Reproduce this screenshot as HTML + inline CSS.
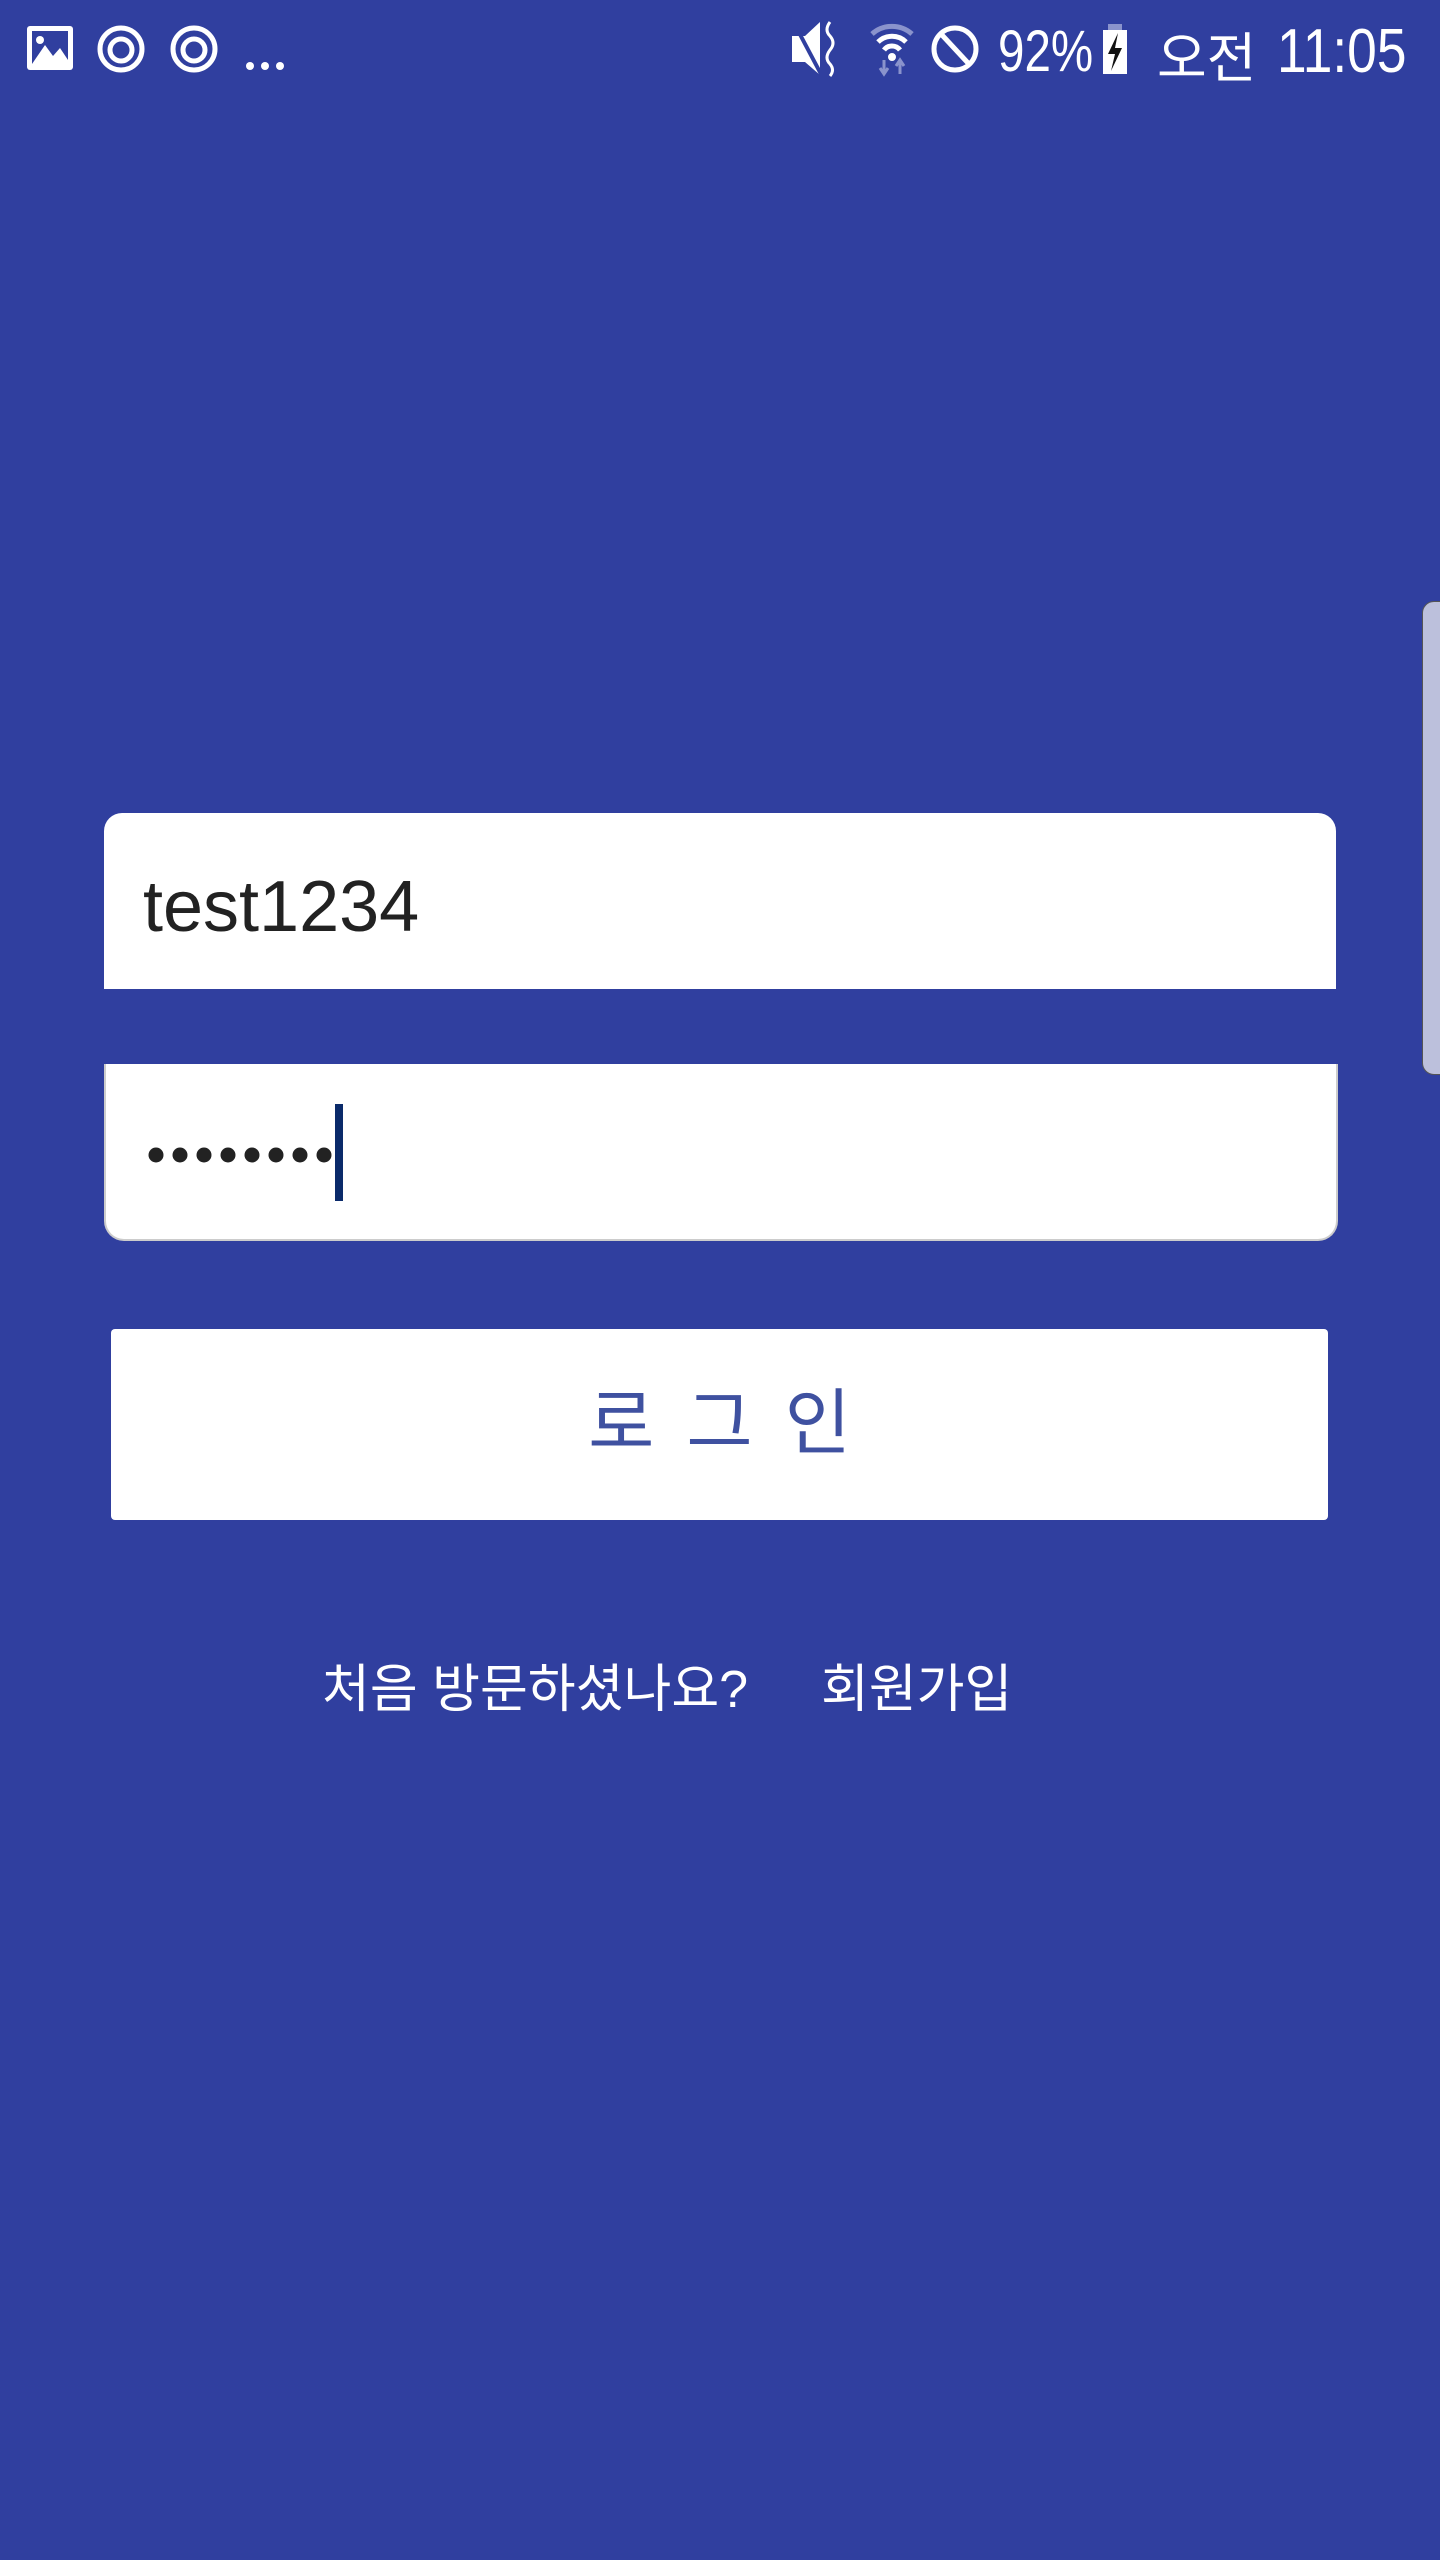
<!DOCTYPE html>
<html><head><meta charset="utf-8"><style>
body{margin:0;width:1440px;height:2560px;background:#303f9f;position:relative;overflow:hidden;font-family:"Liberation Sans","Noto Sans CJK KR",sans-serif}
.a{position:absolute}
</style></head><body>
<svg class="a" style="left:0;top:0" width="1440" height="100">
<g fill="#fff">
<rect x="27" y="26" width="46" height="44" rx="3"/>
<rect x="32" y="31" width="36" height="34" fill="#303f9f"/>
<polygon points="32,64 45,45 53,56 60,48 68,60 68,65 32,65"/>
<circle cx="40" cy="40" r="4"/>
</g>
<g fill="none" stroke="#fff" stroke-width="5">
<circle cx="121" cy="49" r="21"/><circle cx="121" cy="50" r="11"/>
<circle cx="194" cy="49" r="21"/><circle cx="194" cy="50" r="11"/>
</g>
<g fill="#fff"><circle cx="250" cy="66" r="4"/><circle cx="265" cy="66" r="4"/><circle cx="280" cy="66" r="4"/></g>
<polygon points="792,36 805,36 820,22 820,75 805,62 792,62" fill="#fff"/>
<line x1="795" y1="25" x2="822" y2="76" stroke="#303f9f" stroke-width="4"/>
<path d="M830 22 q-6 8 0 14 q6 7 0 14 q-6 8 0 14 q5 6 0 12" stroke="#fff" stroke-width="3" fill="none"/>
<path d="M872 34 a30 30 0 0 1 40 0" stroke="#8a93cc" stroke-width="5" fill="none"/>
<path d="M878 42 a20 20 0 0 1 28 0 M884 50 a10 10 0 0 1 16 0" stroke="#fff" stroke-width="5" fill="none"/>
<circle cx="892" cy="57" r="4" fill="#fff"/>
<path d="M884 60v14M880 68l4 6 4-6M900 74v-14M896 66l4-6 4 6" stroke="#8a93cc" stroke-width="3" fill="none"/>
<circle cx="955" cy="49" r="21" fill="none" stroke="#fff" stroke-width="5"/>
<line x1="942" y1="35" x2="968" y2="63" stroke="#fff" stroke-width="5"/>
<rect x="1108" y="24" width="14" height="6" fill="#8a93cc"/>
<rect x="1103" y="30" width="24" height="44" fill="#fff"/>
<polygon points="1118,33 1108,54 1115,54 1111,71 1122,48 1115,48" fill="#111"/>
</svg>
<div class="a" style="left:998px;top:18px;color:#fff;font-size:58px;transform:scaleX(.82);transform-origin:left;white-space:nowrap">92%</div>
<div class="a" style="left:1157px;top:14px;color:#fff;font-size:54px;white-space:nowrap">오전</div>
<div class="a" style="left:1277px;top:16px;color:#fff;font-size:62px;white-space:nowrap;transform:scaleX(.86);transform-origin:left">11:05</div>
<div class="a" style="left:1422px;top:601px;width:30px;height:472px;background:#bcc0dc;border-radius:12px;border:1px solid #555"></div>
<div class="a" style="left:104px;top:813px;width:1232px;height:176px;background:#fff;border-radius:18px 18px 0 0"></div>
<div class="a" style="left:143px;top:866px;font-size:72px;color:#222">test1234</div>
<div class="a" style="left:104px;top:1064px;width:1230px;height:175px;background:#fff;border:2px solid #ccc;border-top:none;border-radius:0 0 20px 20px"></div>
<svg class="a" style="left:140px;top:1100px" width="220" height="110"><g fill="#222">
<circle cx="16" cy="55" r="7.5"/><circle cx="40" cy="55" r="7.5"/><circle cx="64" cy="55" r="7.5"/><circle cx="88" cy="55" r="7.5"/><circle cx="112" cy="55" r="7.5"/><circle cx="136" cy="55" r="7.5"/><circle cx="160" cy="55" r="7.5"/><circle cx="184" cy="55" r="7.5"/></g>
<rect x="195" y="4" width="8" height="97" fill="#0a2a6a"/></svg>
<div class="a" style="left:111px;top:1329px;width:1217px;height:191px;background:#fff;border-radius:4px;text-align:center;line-height:191px;font-size:72px;color:#3f51a0;letter-spacing:6px;padding-left:6px;box-sizing:border-box">로 그 인</div>
<div class="a" style="left:322px;top:1647px;font-size:52px;color:#fff;white-space:nowrap">처음 방문하셨나요?</div>
<div class="a" style="left:821px;top:1647px;font-size:52px;color:#fff;white-space:nowrap">회원가입</div>
</body></html>
